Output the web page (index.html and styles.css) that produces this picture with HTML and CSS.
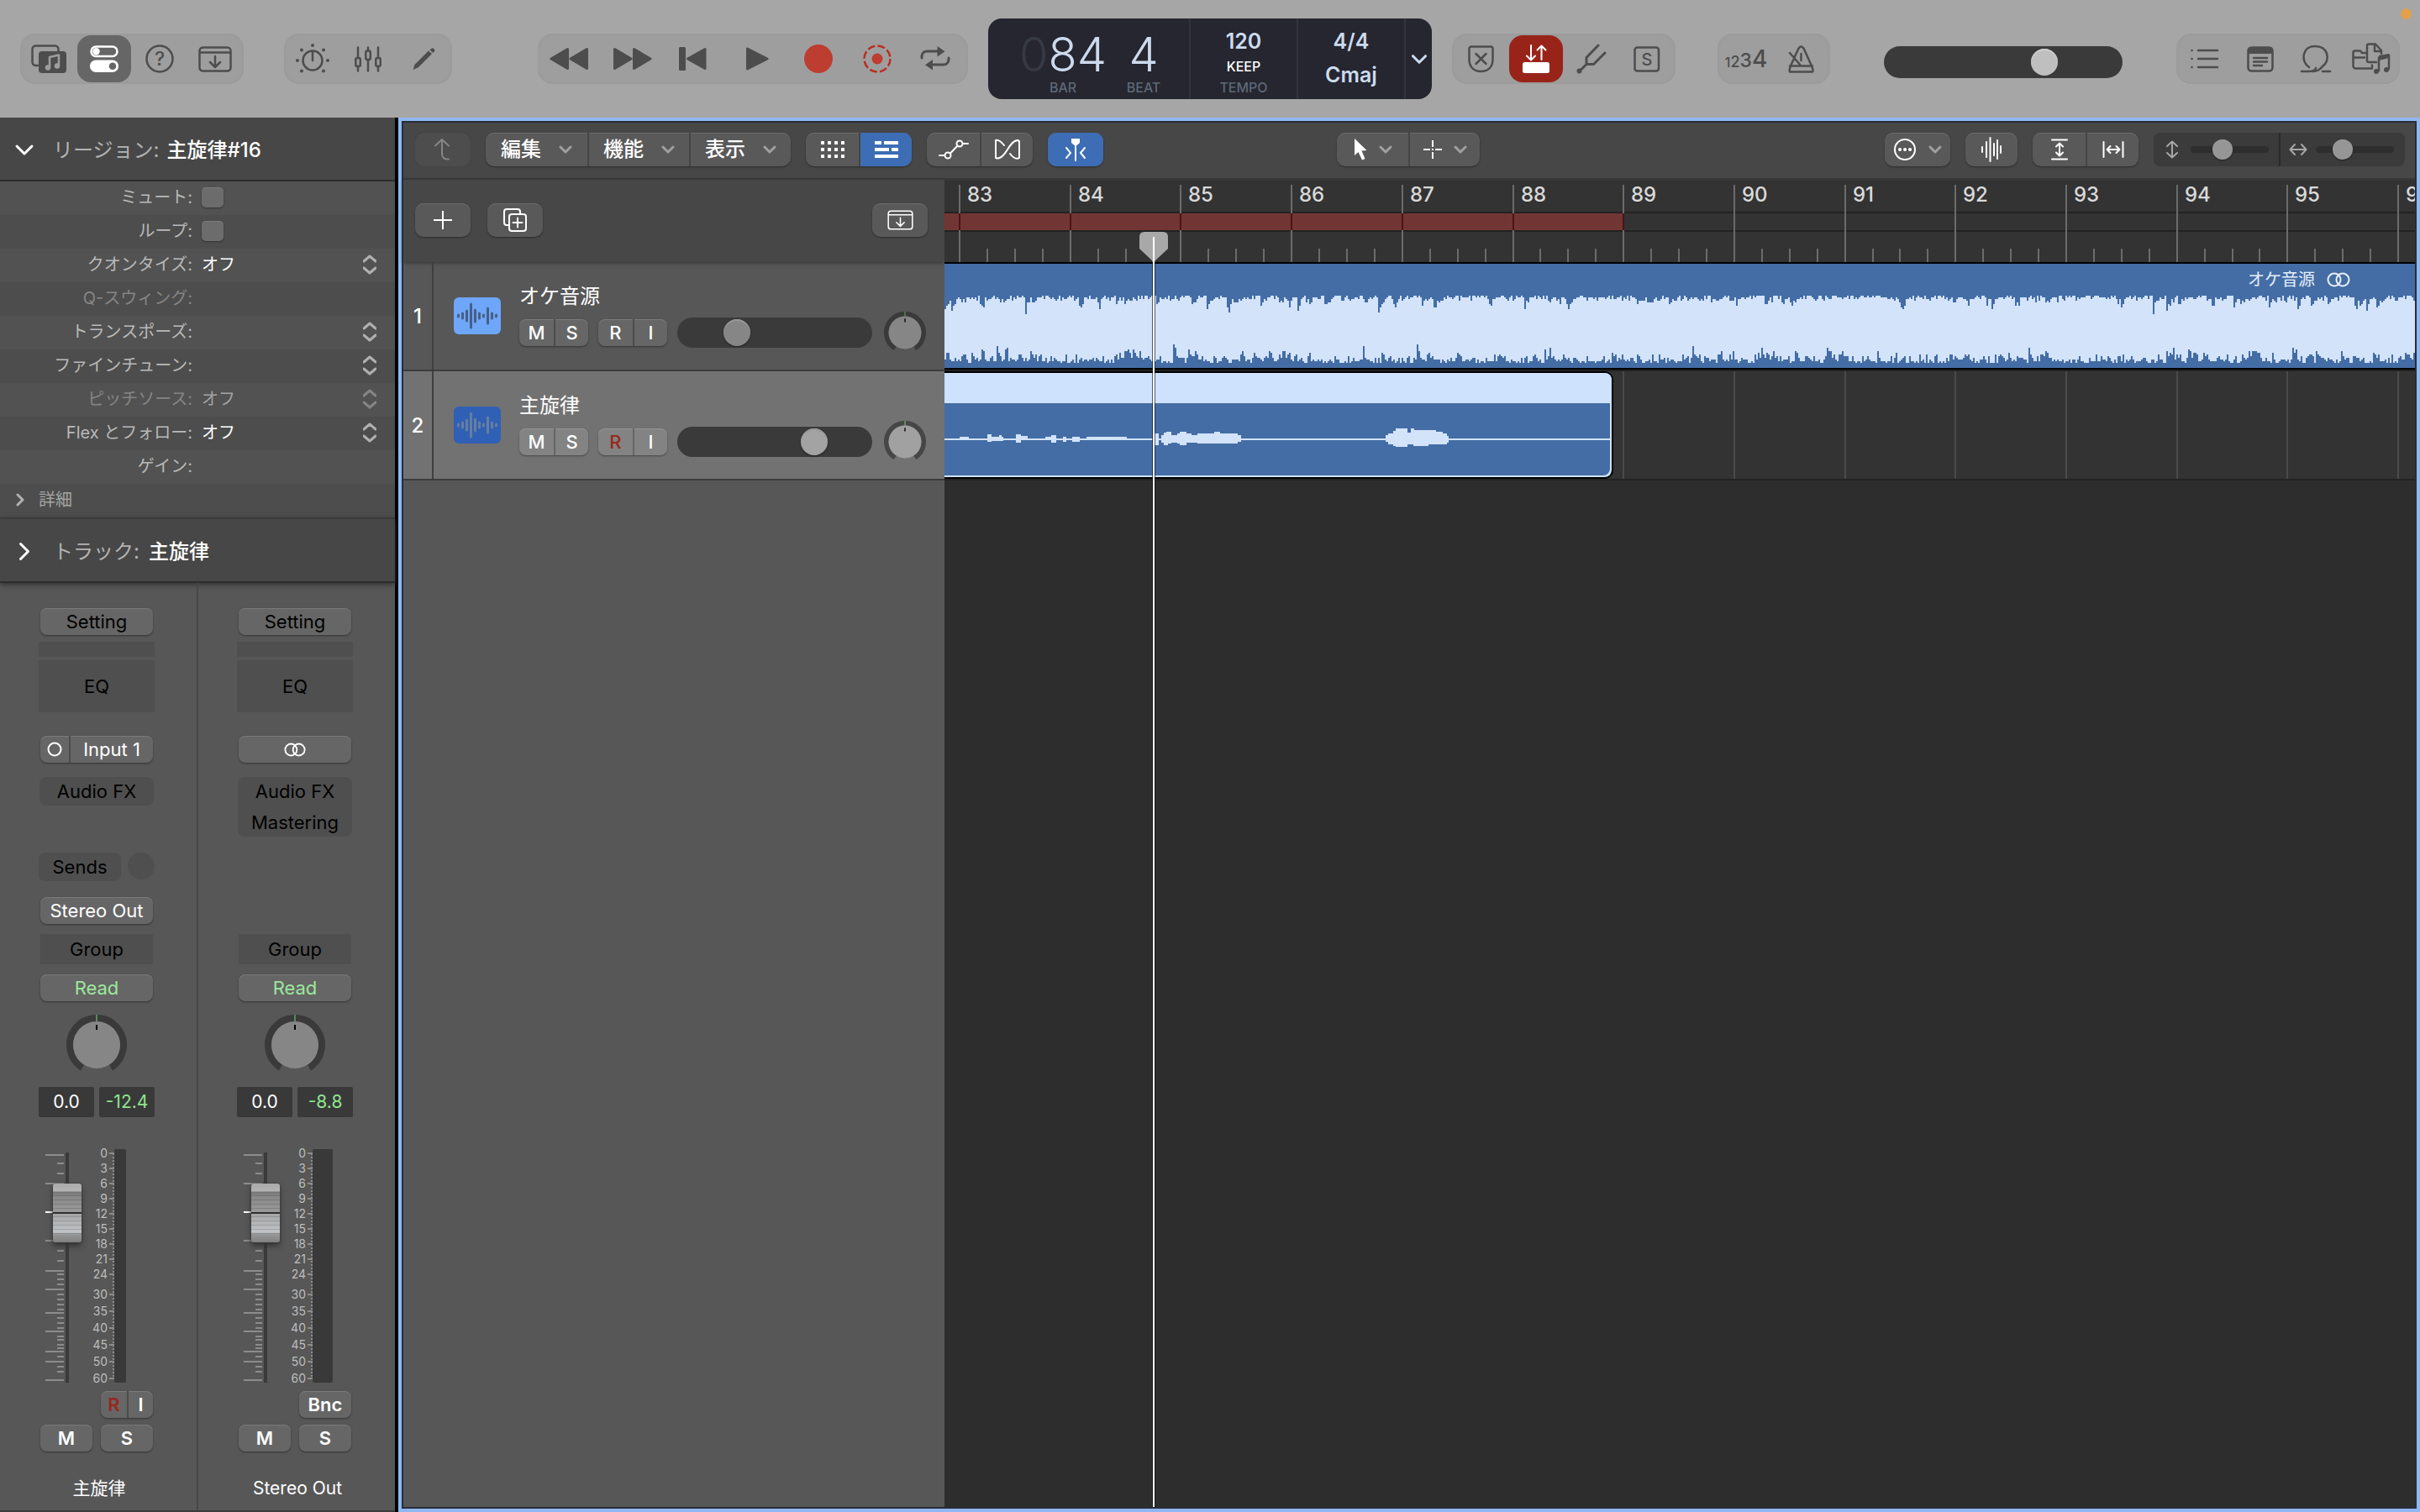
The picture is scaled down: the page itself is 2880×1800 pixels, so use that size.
FILE: index.html
```html
<!doctype html>
<html lang="ja">
  <head>
    <meta charset="utf-8" />
    <title>主旋律 - トラック</title>
    <meta name="viewport" content="width=device-width, initial-scale=1" />
    <link rel="stylesheet" href="styles.css" />
  </head>
  <body>
    <svg class="defs" aria-hidden="true">
      <symbol id="i-down" viewBox="0 0 16 10"><path d="M2 2l6 6 6-6" /></symbol>
      <symbol id="i-step" viewBox="0 0 16 24"><path d="M1 8l7-6 7 6M1 16l7 6 7-6" /></symbol>
      <symbol id="i-tray" viewBox="0 0 40 31">
        <rect x="1.5" y="1.5" width="37" height="28" rx="4" /><path d="M2 7.5h36M20 12v13M14 19l6 6 6-6" />
      </symbol>
      <symbol id="i-stereo" viewBox="0 0 28 18"><circle cx="9" cy="9" r="7.5" /><circle cx="19" cy="9" r="7.5" /></symbol>
      <symbol id="i-wave" viewBox="0 0 50 34">
        <path d="M2.500 16v2M7.500 14v6M12.500 11v12M17.500 3v28M22.500 10v14M27.500 14v6M32.500 16v2M37.500 8v18M42.500 14v6M47.500 16v2" />
      </symbol>
      <symbol id="i-pan" viewBox="0 0 72 72">
        <path class="ring" d="M19 63A32 32 0 1 1 53 63" />
        <path class="zero" d="M36 0v8" /><circle class="cap" cx="36" cy="36" r="28" /><path class="mark" d="M36 12v6" />
      </symbol>
    </svg>

    <header class="toolbar">
      <div class="group">
        <button aria-label="ライブラリ">
          <svg class="icon" width="42" height="34">
            <path d="M8 25H5.500a4 4 0 0 1-4-4V5.500a4 4 0 0 1 4-4h23a4 4 0 0 1 4 4V8" />
            <rect class="solid" x="9" y="8" width="33" height="26" rx="4" />
            <path class="cut" d="M22 27V15l11-2.500V25" /><circle class="cutfill" cx="20" cy="27.500" r="3.200" /><circle class="cutfill" cx="31" cy="25.500" r="3.200" />
          </svg>
        </button>
        <button class="on" aria-label="インスペクタ">
          <svg class="icon" width="34" height="32">
            <rect x="1.500" y="1.500" width="31" height="11.500" rx="5.700" /><circle class="solid" cx="7.500" cy="7.200" r="4.200" />
            <rect class="solid" y="17.500" width="34" height="14.500" rx="7.200" /><circle class="onhole" cx="27" cy="24.700" r="4.300" />
          </svg>
        </button>
        <button aria-label="クイックヘルプ">
          <svg class="icon" width="34" height="34">
            <circle cx="17" cy="17" r="15.500" /><text x="17" y="25" font-size="23" text-anchor="middle">?</text>
          </svg>
        </button>
        <button aria-label="ツールバー"><svg class="icon" width="40" height="31"><use href="#i-tray" /></svg></button>
      </div>

      <div class="group">
        <button aria-label="Smart Control">
          <svg class="icon" width="40" height="36">
            <circle cx="20" cy="20" r="11.500" /><path d="M20 10v10" />
            <g class="solid"><circle cx="20" cy="2" r="2" /><circle cx="7" cy="7.500" r="2" /><circle cx="33" cy="7.500" r="2" /><circle cx="2" cy="20" r="2" /><circle cx="38" cy="20" r="2" /><circle cx="7" cy="32.500" r="2" /><circle cx="33" cy="32.500" r="2" /></g>
          </svg>
        </button>
        <button aria-label="ミキサー">
          <svg class="icon" width="32" height="31">
            <path d="M4 1.500v12M4 24v5.500M16 1.500v4M16 16v13.500M28 1.500v12M28 24v5.500" />
            <rect x="1.300" y="14" width="5.500" height="10" rx="2" /><rect x="13.300" y="5.500" width="5.500" height="10.500" rx="2" /><rect x="25.300" y="14" width="5.500" height="10" rx="2" />
          </svg>
        </button>
        <button aria-label="エディタ">
          <svg class="icon" width="27" height="27"><path class="solid" d="M0.500 26l2-6L19 3.500 23 7 6.500 23.500zM20.500 2.500l2-1.800q1.500-1 3 .5t.5 3L24.500 6z" /></svg>
        </button>
      </div>

      <div class="center">
        <div class="group transport">
          <button aria-label="巻き戻し"><svg class="icon join" width="46" height="28"><path d="M2 14L21.500 2.500v23zM25 14L44.500 2.500v23z" /></svg></button>
          <button aria-label="早送り"><svg class="icon join" width="46" height="28"><path d="M1.500 2.500L21 14 1.500 25.500zM24.500 2.500L44 14 24.500 25.500z" /></svg></button>
          <button aria-label="先頭へ"><svg class="icon join" width="33" height="28"><path d="M1.500 1.500h5v25h-5zM10.500 14L31 2.500v23z" /></svg></button>
          <button aria-label="再生"><svg class="icon join" width="27" height="28"><path d="M1.500 2v24L25 14z" /></svg></button>
          <button aria-label="録音"><svg class="icon" width="34" height="34"><circle class="rec" cx="17" cy="17" r="17" /></svg></button>
          <button aria-label="キャプチャ"><svg class="icon" width="36" height="36"><circle class="dash" cx="18" cy="18" r="15.500" /><circle class="rec" cx="18" cy="18" r="6.500" /></svg></button>
          <button aria-label="サイクル">
            <svg class="icon loop" width="36" height="32">
              <path d="M2 15v-2a6 6 0 0 1 6-6h14M34 15v2a6 6 0 0 1-6 6H14" /><path class="solid" d="M20.500 1v12.500l9-6.300zM15 17v12.500l-9-6.300z" />
            </svg>
          </button>
        </div>

        <div class="lcd">
          <div class="position">
            <div><b class="digits"><i>0</i>84</b><small>BAR</small></div>
            <div><b class="digits">4</b><small>BEAT</small></div>
          </div>
          <div class="tempo"><b>120</b><em>KEEP</em><small>TEMPO</small></div>
          <div class="key"><b>4/4</b><b class="scale">Cmaj</b></div>
          <button aria-label="表示モード"><svg class="icon" width="20" height="13"><use href="#i-down" /></svg></button>
        </div>

        <div class="group">
          <button aria-label="置き換え">
            <svg class="icon" width="31" height="33"><path d="M4 1.500h23a2.500 2.500 0 0 1 2.500 2.500v13c0 9-6 14-14 14s-14-5-14-14V4A2.500 2.500 0 0 1 4 1.500zM9.500 10l12 12M21.500 10l-12 12" /></svg>
          </button>
          <button class="on armed" aria-label="ロー・レイテンシー">
            <svg class="icon thin" width="32" height="34"><path d="M10 1v17M5 13.500l5 5 5-5M22.500 18V1.500M17.500 6.500l5-5 5 5" /><rect class="solid" y="21" width="32" height="13" rx="2.500" /></svg>
          </button>
          <button aria-label="チューナー">
            <svg class="icon fork" width="36" height="36"><path d="M26 2L12 16.500V24.500h8.500L34 11M12 24.500L4 32.500" /><circle class="solid" cx="3.500" cy="32.500" r="3" /></svg>
          </button>
          <button aria-label="ソロ">
            <svg class="icon" width="32" height="31"><rect x="1.500" y="1.500" width="28.500" height="28" rx="3" /><text x="16" y="23" font-size="20" text-anchor="middle">S</text></svg>
          </button>
        </div>
      </div>

      <div class="group">
        <button class="count" aria-label="カウントイン"><span>1</span><span>2</span><span>3</span><span>4</span></button>
        <button aria-label="メトロノーム">
          <svg class="icon" width="32" height="33"><path d="M2 31.500c-1-2 0-4 1-7l9-20q3.500-6 7 0l9 20c1 3 2.500 5 1 7zM2 24.500h27M15.500 10v8M2 9l13 15" /></svg>
        </button>
      </div>
      <input class="volume" type="range" value="70" aria-label="マスター音量" />
      <div class="group">
        <button aria-label="リスト"><svg class="icon" width="36" height="26"><path d="M10 3h23M10 13h23M10 23h23M2.500 3h.1M2.500 13h.1M2.500 23h.1" /></svg></button>
        <button aria-label="ノート">
          <svg class="icon" width="32" height="31"><rect x="1.500" y="1.500" width="29" height="28" rx="4" /><path class="solid" d="M1 9V5a4 4 0 0 1 4-4h22a4 4 0 0 1 4 4v4z" /><path d="M8 14h16M8 18.500h16M8 23h10" /></svg>
        </button>
        <button aria-label="ループブラウザ">
          <svg class="icon" width="38" height="35"><path d="M2 32h9c5 0 8-2 8-4M11 27C1 21 2 2 18 2s19 17 9 24c-3 3-5 6-12 6M27 32h9" /></svg>
        </button>
        <button aria-label="ブラウザ">
          <svg class="icon" width="46" height="38">
            <path d="M16 12h-4l-2-2.500H3.500A2 2 0 0 0 1.500 11.500v16a3 3 0 0 0 3 3H24v-4M1.500 17.500H15M29 23h-9a2 2 0 0 1-2-2V3.500a2 2 0 0 1 2-2h8L35 9v4M27 2v8h8" />
            <path d="M32 33V17.500l12-3V31" /><path class="solid" d="M32 15l12-2v5l-12 3z" /><circle class="solid" cx="29" cy="34" r="3" /><circle class="solid" cx="41" cy="32" r="3" />
          </svg>
        </button>
      </div>
      <span class="mic-dot"></span>
    </header>

    <div class="workspace">
      <aside class="inspector">
        <h2><svg class="icon" width="24" height="15"><use href="#i-down" /></svg><span>リージョン:</span> 主旋律#16</h2>
        <form class="params">
          <div class="row"><label for="mute">ミュート:</label><input id="mute" type="checkbox" /></div>
          <div class="row"><label for="loop">ループ:</label><input id="loop" type="checkbox" /></div>
          <div class="row"><label for="quantize">クオンタイズ:</label><select id="quantize"><option>オフ</option></select><svg class="icon" width="16" height="24"><use href="#i-step" /></svg></div>
          <div class="row dim"><label for="swing">Q-スウィング:</label><input id="swing" type="text" disabled /></div>
          <div class="row"><label for="transpose">トランスポーズ:</label><input id="transpose" type="text" /><svg class="icon" width="16" height="24"><use href="#i-step" /></svg></div>
          <div class="row"><label for="fine">ファインチューン:</label><input id="fine" type="text" /><svg class="icon" width="16" height="24"><use href="#i-step" /></svg></div>
          <div class="row dim"><label for="pitch">ピッチソース:</label><select id="pitch" disabled><option>オフ</option></select><svg class="icon" width="16" height="24"><use href="#i-step" /></svg></div>
          <div class="row"><label for="flex">Flex とフォロー:</label><select id="flex"><option>オフ</option></select><svg class="icon" width="16" height="24"><use href="#i-step" /></svg></div>
          <div class="row"><label for="gain">ゲイン:</label><input id="gain" type="text" /></div>
          <div class="row more"><svg class="icon right" width="16" height="10"><use href="#i-down" /></svg>詳細</div>
        </form>
        <h2 class="closed"><svg class="icon right" width="24" height="15"><use href="#i-down" /></svg><span>トラック:</span> 主旋律</h2>

        <div class="strips">
          <section class="strip">
            <button class="key-btn dark">Setting</button>
            <div class="slot gain-slot"></div>
            <div class="slot eq">EQ</div>
            <div class="pair input"><button aria-label="モノラル"><svg class="icon" width="18" height="18"><circle cx="9" cy="9" r="7.500" /></svg></button><button>Input 1</button></div>
            <div class="fx"><div>Audio FX</div></div>
            <div class="sends"><div>Sends</div><span></span></div>
            <div class="output"><button class="key-btn">Stereo Out</button></div>
            <div class="slot grp">Group</div>
            <button class="key-btn read">Read</button>
            <svg class="pan" width="72" height="72"><use href="#i-pan" /></svg>
            <div class="levels"><output>0.0</output><output class="peak">-12.4</output></div>
            <div class="fader"><input type="range" value="82" aria-label="主旋律 音量" /><div class="db"></div><div class="meter"></div></div>
            <div class="arm"><div class="pair"><button class="red">R</button><button>I</button></div></div>
            <div class="ms"><button class="key-btn">M</button><button class="key-btn">S</button></div>
            <div class="strip-name">主旋律</div>
          </section>
          <section class="strip">
            <button class="key-btn dark">Setting</button>
            <div class="slot gain-slot"></div>
            <div class="slot eq">EQ</div>
            <button class="key-btn input" aria-label="ステレオ"><svg class="icon" width="26" height="17"><use href="#i-stereo" /></svg></button>
            <div class="fx"><div>Audio FX</div><div>Mastering</div></div>
            <div class="sends"></div>
            <div class="output"></div>
            <div class="slot grp">Group</div>
            <button class="key-btn read">Read</button>
            <svg class="pan" width="72" height="72"><use href="#i-pan" /></svg>
            <div class="levels"><output>0.0</output><output class="peak">-8.8</output></div>
            <div class="fader"><input type="range" value="82" aria-label="Stereo Out 音量" /><div class="db"></div><div class="meter wide"></div></div>
            <div class="arm"><button class="key-btn">Bnc</button></div>
            <div class="ms"><button class="key-btn">M</button><button class="key-btn">S</button></div>
            <div class="strip-name">Stereo Out</div>
          </section>
        </div>
      </aside>

      <main class="arrange">
        <nav class="menubar">
          <div class="seg off"><button aria-label="上へ"><svg class="icon" width="22" height="28"><path d="M2 9.500L10 2l8 7.500M10 2v17q0 7 8 6.500" /></svg></button></div>
          <div class="seg menus">
            <button>編集<svg class="icon" width="16" height="10"><use href="#i-down" /></svg></button>
            <button>機能<svg class="icon" width="16" height="10"><use href="#i-down" /></svg></button>
            <button>表示<svg class="icon" width="16" height="10"><use href="#i-down" /></svg></button>
          </div>
          <div class="seg">
            <button aria-label="グリッド"><svg class="icon grid" width="28" height="20"><path d="M0 2h28M0 10h28M0 18h28" /></svg></button>
            <button class="blue" aria-label="トラック"><svg class="icon bars" width="28" height="20"><path d="M0 2h8M11 2h17M0 10h17M20 10h8M0 18h28" /></svg></button>
          </div>
          <div class="seg">
            <button aria-label="オートメーション"><svg class="icon" width="36" height="26"><circle cx="11" cy="20" r="3.500" /><circle cx="25" cy="6" r="3.500" /><path d="M1 20h6M14 17.500L22.500 8.500M29 6h6" /></svg></button>
            <button aria-label="Flex"><svg class="icon" width="32" height="26"><path d="M12 8C8 3 5 1 2 2v21c5 2 9-2 14-10S26 0 30 3v20c-4 2-8-1-11-5" /></svg></button>
          </div>
          <div class="seg"><button class="blue" aria-label="キャッチ"><svg class="icon" width="26" height="28"><path class="solid" d="M8 1h10v5l-3.500 3h-3L8 6z" /><path d="M13 6v21M2 12l5 6-5 6M24 12l-5 6 5 6" /></svg></button></div>
          <div class="seg tools">
            <button aria-label="ポインタツール"><svg class="icon" width="16" height="28"><path class="solid" d="M1 1v20l4.500-4 4.500 9.500 3.500-1.500-4-9.500 6-.5z" /></svg><svg class="icon" width="16" height="10"><use href="#i-down" /></svg></button>
            <button aria-label="マーキーツール"><svg class="icon cross" width="22" height="22"><path d="M11 0v8M11 14v8M0 11h8M14 11h8M11 10v2" /></svg><svg class="icon" width="16" height="10"><use href="#i-down" /></svg></button>
          </div>
          <div class="seg snap"><button aria-label="スナップ"><svg class="icon" width="28" height="28"><circle cx="14" cy="14" r="12" /><path class="dots" d="M8 14h.1M14 14h.1M20 14h.1" /></svg><svg class="icon" width="16" height="10"><use href="#i-down" /></svg></button></div>
          <div class="seg"><button class="narrow" aria-label="波形ズーム"><svg class="icon" width="26" height="30"><path d="M2 12v6M7 6v18M11.500 1v28M16 8v14M20 4v22M24 11v8" /></svg></button></div>
          <div class="seg">
            <button aria-label="縦ズーム"><svg class="icon" width="20" height="26"><path d="M1 1.500h18M1 24.500h18M10 6v14M6 9.500L10 5.500l4 4M6 16.500l4 4 4-4" /></svg></button>
            <button aria-label="横ズーム"><svg class="icon" width="26" height="20"><path d="M1.500 1v18M24.500 1v18M6 10h14M9.500 6L5.500 10l4 4M16.500 6l4 4-4 4" /></svg></button>
          </div>
          <div class="zoom">
            <label for="zoom-v"><svg class="icon" width="16" height="22"><path d="M8 2v18M2 7l6-5.500L14 7M2 15l6 5.500L14 15" /></svg></label><input id="zoom-v" type="range" value="38" aria-label="縦" />
            <label for="zoom-h"><svg class="icon" width="22" height="16"><path d="M2 8h18M7 2L1.500 8 7 14M15 2l5.500 6L15 14" /></svg></label><input id="zoom-h" type="range" value="29" aria-label="横" />
          </div>
        </nav>

        <div class="tracks">
          <div class="headers">
            <div class="head-tools">
              <div class="seg"><button aria-label="トラックを追加"><svg class="icon" width="22" height="22"><path d="M11 0v22M0 11h22" /></svg></button></div>
              <div class="seg"><button aria-label="トラックを複製"><svg class="icon" width="28" height="28"><path d="M7 20H4a3 3 0 0 1-3-3V4a3 3 0 0 1 3-3h13a3 3 0 0 1 3 3v2" /><rect x="7" y="7" width="20" height="20" rx="3" /><path d="M17 11.500v11M11.500 17h11" /></svg></button></div>
              <div class="seg last"><button aria-label="グローバルトラック"><svg class="icon" width="31" height="24"><use href="#i-tray" /></svg></button></div>
            </div>
            <section class="track">
              <span class="num">1</span>
              <span class="badge light"><svg width="50" height="34"><use href="#i-wave" /></svg></span>
              <div class="body">
                <div class="name">オケ音源</div>
                <div class="controls">
                  <div class="pair"><button>M</button><button>S</button></div>
                  <div class="pair"><button>R</button><button>I</button></div>
                  <input type="range" value="27" aria-label="オケ音源 音量" />
                  <svg class="pan" width="50" height="50"><use href="#i-pan" /></svg>
                </div>
              </div>
            </section>
            <section class="track selected">
              <span class="num">2</span>
              <span class="badge"><svg width="50" height="34"><use href="#i-wave" /></svg></span>
              <div class="body">
                <div class="name">主旋律</div>
                <div class="controls">
                  <div class="pair"><button>M</button><button>S</button></div>
                  <div class="pair"><button class="red">R</button><button>I</button></div>
                  <input type="range" value="74" aria-label="主旋律 音量" />
                  <svg class="pan" width="50" height="50"><use href="#i-pan" /></svg>
                </div>
              </div>
            </section>
          </div>

          <div class="timeline">
            <div class="ruler">
              <div class="bar-row"></div>
              <div class="cycle-row"><div class="cycle"></div></div>
              <div class="marks"></div>
            </div>
            <div class="lane">
              <div class="region full">
                <div class="region-name">オケ音源<svg class="icon" width="28" height="18"><use href="#i-stereo" /></svg></div>
                <svg class="wave" id="wave1" height="80"></svg>
              </div>
            </div>
            <div class="lane">
              <div class="marks"></div>
              <div class="region take">
                <div class="region-head"></div>
                <svg class="wave" id="wave2" height="86"></svg>
              </div>
            </div>
            <div class="playhead"><svg width="34" height="36"><path d="M6 0h22q6 0 6 6v14L17 36 0 20V6q0-6 6-6z" /></svg></div>
          </div>
        </div>
      </main>
    </div>
    <script src="script.js"></script>
  </body>
</html>
```
FILE: styles.css
```css
* {
  box-sizing: border-box;
}
body {
  margin: 0;
  height: 100vh;
  display: flex;
  flex-direction: column;
  overflow: hidden;
  background: #000;
  color: #fff;
  font: 20px/28px Inter, "Noto Sans CJK JP", sans-serif;
}
button,
input,
select {
  margin: 0;
  padding: 0;
  border: 0;
  background: none;
  color: inherit;
  font: inherit;
}
button {
  display: flex;
  align-items: center;
  justify-content: center;
}
.defs {
  position: absolute;
  width: 0;
  height: 0;
}
.icon {
  flex: none;
  fill: none;
  stroke: currentColor;
  stroke-width: 2;
  stroke-linecap: round;
  stroke-linejoin: round;
}
.icon .solid,
.icon text {
  fill: currentColor;
  stroke: none;
}
.icon text {
  font-weight: 500;
}
.right {
  transform: rotate(-90deg);
}

/* top toolbar */
.toolbar {
  position: relative;
  flex: none;
  display: flex;
  align-items: flex-start;
  gap: 48px;
  height: 140px;
  padding: 40px 24px 0;
  background: #a6a6a6;
  color: #4d4d4d;
}
.toolbar .icon {
  stroke-width: 2.5;
}
.group {
  display: flex;
  align-items: center;
  height: 60px;
  padding: 0 1px;
  border-radius: 18px;
  background: #9e9e9e;
  box-shadow: inset 0 0 4px #979797;
}
.group button {
  width: 66px;
  height: 56px;
}
.group .on {
  width: 64px;
  margin: 0 1px;
  border-radius: 16px;
  background: #666;
  color: #fff;
}
.group .armed {
  background: #982419;
}
.toolbar .thin {
  stroke-width: 2;
}
.onhole {
  fill: #666;
  stroke: none;
}
.cut {
  stroke: #9e9e9e;
}
.cutfill {
  fill: #9e9e9e;
  stroke: none;
}
.center {
  display: flex;
  align-items: center;
  gap: 24px;
  height: 96px;
  margin: -18px 2px 0 auto;
}
.transport {
  display: grid;
  grid-template-columns: 72px 79px 64px 90px 56px 84px 54px;
  width: 512px;
}
.transport button {
  width: auto;
}
.toolbar .join {
  fill: currentColor;
  stroke-width: 3;
}
.rec {
  fill: #bd3d30;
  stroke: none;
}
.dash {
  stroke: #b93022;
  stroke-dasharray: 9 3.17;
  stroke-linecap: butt;
}
.toolbar .loop,
.toolbar .fork {
  stroke-width: 3;
}
.lcd {
  display: grid;
  grid-template-columns: 239px 128px 128px 33px;
  width: 528px;
  height: 96px;
  border-radius: 16px;
  background: #25262f;
  color: #cddaed;
  text-align: center;
}
.lcd > * + * {
  border-left: 2px solid #32343e;
}
.lcd > div {
  padding-top: 13px;
}
.lcd b,
.lcd em,
.lcd small {
  display: block;
  font-style: normal;
}
.lcd b {
  font-size: 25px;
  font-weight: 600;
  line-height: 28px;
}
.lcd em {
  color: #fff;
  font-size: 16px;
  font-weight: 500;
  line-height: 32px;
}
.lcd small {
  color: #5d6878;
  font-size: 16px;
  font-weight: 500;
  line-height: 18px;
}
.lcd .position {
  display: grid;
  grid-template-columns: 110px 82px;
  padding-left: 34px;
}
.lcd .digits {
  font-size: 56px;
  font-weight: 300;
  line-height: 60px;
}
.digits i {
  color: #363a45;
  font-style: normal;
}
.lcd .scale {
  line-height: 52px;
}
.count {
  align-items: baseline;
  font-weight: 500;
  line-height: 56px;
}
.count span:nth-child(1) {
  font-size: 16px;
}
.count span:nth-child(2) {
  font-size: 18px;
}
.count span:nth-child(3) {
  font-size: 23px;
}
.count span:nth-child(4) {
  font-size: 28px;
}
.volume {
  margin: 15px 16px 0;
}
.mic-dot {
  position: absolute;
  top: 10px;
  right: 10px;
  width: 13px;
  height: 13px;
  border-radius: 50%;
  background: #e2a04a;
}

/* sliders */
input[type="range"] {
  appearance: none;
  flex: none;
  width: 232px;
  height: 36px;
  padding: 0 2px;
  border-radius: 18px;
  background: #3a3a3a;
}
input[type="range"]::-webkit-slider-thumb {
  appearance: none;
  width: 32px;
  height: 32px;
  border-radius: 50%;
  background: #868686;
  box-shadow: inset 0 2px 1px #999, 0 1px 2px #222;
}
input.volume {
  width: 284px;
  height: 38px;
  padding: 0 3px;
  border-radius: 19px;
}
input.volume::-webkit-slider-thumb {
  background: #bfbfbf;
  box-shadow: inset 0 2px 1px #cfcfcf;
}

/* inspector */
.workspace {
  flex: 1;
  display: flex;
  gap: 4px;
  min-height: 0;
}
.inspector {
  flex: none;
  display: flex;
  flex-direction: column;
  width: 470px;
  background: #575757;
}
.inspector h2 {
  display: flex;
  flex: none;
  align-items: center;
  height: 76px;
  margin: 0;
  padding: 3px 0 0 17px;
  border-bottom: 2px solid #2c2c2c;
  background: #474747;
  font-size: 24px;
  font-weight: 500;
}
.inspector h2 span {
  margin: 0 11px 0 22px;
  color: #b3b3b3;
  font-weight: 400;
}
.inspector h2:first-child span {
  margin-right: 9px;
}
.inspector h2.closed {
  height: 78px;
  border-top: 2px solid #3c3c3c;
}
.closed {
  box-shadow: 0 2px 6px #333;
}
.row {
  display: flex;
  align-items: center;
  height: 40px;
  padding: 0 22px 2px 0;
  background: #525252;
  color: #fff;
}
.row:nth-child(even) {
  background: #4d4d4d;
}
.row label {
  flex: none;
  width: 229px;
  margin-right: 11px;
  color: #b9b9b9;
  text-align: right;
}
.row select,
.row input[type="text"] {
  appearance: none;
  flex: 1;
  min-width: 0;
  opacity: 1;
}
.row .icon {
  color: #b0b0b0;
  stroke-width: 3;
}
.dim label,
.row.dim .icon {
  color: #858585;
}
.dim label {
  color: #858585 !important;
}
.dim select {
  color: #a3a3a3;
}
.row input[type="checkbox"] {
  appearance: none;
  width: 26px;
  height: 24px;
  border-radius: 5px;
  background: #6c6c6c;
  box-shadow: inset 0 1px #7c7c7c, 0 1px 2px #333;
}
.row.more {
  gap: 14px;
  padding-left: 16px;
  color: #a5a5a5;
}

/* channel strips */
.strips {
  flex: 1;
  display: grid;
  grid-template-columns: 118fr 117fr;
  border-bottom: 2px solid #3c3c3c;
  font-size: 22px;
}
.strip {
  display: flex;
  flex-direction: column;
  align-items: center;
  padding: 30px 4px 0 0;
  border-right: 2px solid #474747;
}
.strip:last-child {
  border: 0;
}
.key-btn,
.pair {
  width: 134px;
  height: 32px;
  border-radius: 8px;
  background: #666;
  box-shadow: inset 0 1px #7b7b7b, 0 1px 2px #333;
}
.key-btn {
  flex: none;
}
.dark,
.slot,
.fx,
.sends {
  color: #000;
}
.slot {
  width: 138px;
  background: #4f4f4f;
  text-align: center;
}
.gain-slot {
  height: 18px;
  margin: 8px 0 4px;
}
.eq {
  height: 62px;
  line-height: 62px;
}
.input {
  margin-top: 28px;
}
.pair {
  display: grid;
  grid-template-columns: 1fr 1fr;
}
.pair.input {
  grid-template-columns: 34px 1fr;
}
.pair button + button {
  border-left: 2px solid #4c4c4c;
}
.fx {
  width: 136px;
  height: 90px;
  margin-top: 17px;
  text-align: center;
}
.fx div {
  height: 34px;
  border-radius: 8px;
  background: #4f4f4f;
  line-height: 34px;
}
.fx div:nth-child(2) {
  height: 37px;
  border-radius: 0 0 8px 8px;
  line-height: 40px;
}
.fx div:first-child:not(:last-child) {
  border-radius: 8px 8px 0 0;
}
.sends {
  display: flex;
  justify-content: space-between;
  width: 138px;
  height: 34px;
}
.sends div {
  width: 98px;
  border-radius: 8px;
  background: #4f4f4f;
  line-height: 34px;
  text-align: center;
}
.sends span {
  width: 32px;
  height: 32px;
  border-radius: 50%;
  background: #4f4f4f;
}
.output {
  height: 32px;
  margin: 19px 0 12px;
}
.grp {
  width: 134px;
  height: 36px;
  margin-bottom: 12px;
  line-height: 36px;
}
.read {
  color: #9be89b;
}
.strip > .pan {
  flex: none;
  margin: 16px 0 14px;
}
.ring {
  fill: none;
  stroke: #3a3a3a;
  stroke-width: 8;
}
.zero {
  stroke: #7fd67f;
  stroke-width: 1;
}
.controls .zero {
  stroke-width: 2;
}
.cap {
  fill: #868686;
}
.mark {
  stroke: #000;
  stroke-width: 2;
}
.levels {
  display: flex;
  gap: 6px;
}
.levels output {
  width: 66px;
  height: 36px;
  border-radius: 2px;
  background: #393939;
  font-size: 21px;
  line-height: 36px;
  text-align: center;
}
.levels .peak {
  color: #8fe38f;
}
.fader {
  display: flex;
  width: 138px;
  height: 278px;
  margin: 38px 0 10px;
  padding-left: 8px;
}
.fader .ticks {
  flex: none;
  width: 22px;
  stroke: #8c8c8c;
  stroke-width: 2;
}
.fader input[type="range"] {
  writing-mode: vertical-lr;
  direction: rtl;
  width: 34px;
  height: 274px;
  margin: 4px 0 0 -13px;
  padding: 0;
  border-radius: 0;
  background: linear-gradient(90deg, transparent 15px, #3a3a3a 15px 19px, transparent 19px);
}
.fader input[type="range"]::-webkit-slider-thumb {
  width: 34px;
  height: 70px;
  border-radius: 3px;
  background:
    repeating-linear-gradient(transparent 0 4px, rgba(0, 0, 0, 0.14) 4px 5px) 0 10px / 34px 50px no-repeat,
    linear-gradient(#aaa, #b4b4b4 9px, #777 10px, #888 15px, #9a9a9a 34px, #333 34px 36px, #a5a5a5 36px, #c0c4c8 58px, #999 60px, #808080);
  box-shadow: 0 4px 6px #333, 0 0 2px #333;
}
.db {
  position: relative;
  flex: none;
  width: 31px;
  color: #bdbdbd;
  font-size: 14px;
  line-height: 10px;
}
.db span {
  position: absolute;
  right: 0;
}
.fader .fine {
  flex: none;
  width: 8px;
  stroke: #8c8c8c;
  stroke-width: 2;
}
.meter {
  width: 14px;
  border-radius: 2px;
  background: #393939;
}
.meter.wide {
  width: 24px;
}
.arm,
.ms {
  display: flex;
  justify-content: flex-end;
  gap: 10px;
  width: 134px;
  margin-bottom: 8px;
  font-weight: 600;
}
.arm > *,
.ms > * {
  width: 62px;
}
.red {
  color: #97281d;
}
.strip-name {
  margin-top: 22px;
  padding-left: 6px;
  font-size: 21px;
}

/* arrange window */
.arrange {
  flex: 1;
  display: flex;
  flex-direction: column;
  min-width: 0;
  padding: 2px;
  border: 4px solid #8fb8f2;
  background: #272d37;
  box-shadow: 0 -2px #666;
}
.menubar {
  flex: none;
  display: flex;
  align-items: center;
  gap: 18px;
  height: 68px;
  padding: 0 12px 2px 14px;
  border-bottom: 2px solid #393939;
  background: #474747;
}
.seg {
  display: flex;
  height: 40px;
  border-radius: 10px;
  background: #595959;
  box-shadow: inset 0 1px #6c6c6c, 0 1px 2px #2c2c2c;
  overflow: hidden;
}
.seg button {
  min-width: 63px;
}
.seg button:only-child {
  min-width: 66px;
}
.seg button.narrow {
  min-width: 62px;
}
.seg button + button {
  border-left: 2px solid #454545;
}
.seg .blue {
  background: #3d6db5;
}
.off {
  background: #4d4d4d;
  color: #858585;
  box-shadow: 0 0 1px #333;
}
.menus button {
  gap: 21px;
  width: 121px;
  font-size: 24px;
  font-weight: 500;
}
.menus .icon,
.tools .icon:last-child,
.snap .icon:last-child {
  color: #a0a0a0;
  stroke-width: 3;
}
.grid,
.bars {
  stroke-width: 4;
  stroke-linecap: butt;
}
.grid {
  stroke-dasharray: 4 4;
}
.cross {
  stroke-linecap: butt;
}
.dots {
  stroke-width: 4;
}
.tools {
  margin: 0 auto 0 260px;
}
.tools button {
  gap: 14px;
  width: 85px;
}
.snap button {
  gap: 14px;
  width: 78px;
}
.zoom {
  display: flex;
  align-items: center;
  height: 40px;
  border-radius: 8px;
  background: #3b3b3b;
  color: #a6a6a6;
}
.zoom label {
  display: flex;
  justify-content: center;
  width: 44px;
}
.zoom label:nth-of-type(2) {
  align-items: center;
  height: 40px;
  margin-left: 12px;
  border-left: 2px solid #2a2a2a;
}
.zoom input[type="range"] {
  width: 93px;
  height: 8px;
  padding: 0;
  background: #2e2e2e;
}
.zoom input:last-child {
  margin-right: 13px;
}
.zoom input::-webkit-slider-thumb {
  width: 24px;
  height: 24px;
  background: #969696;
}
.tracks {
  flex: 1;
  display: flex;
  min-height: 0;
}
.headers {
  flex: none;
  width: 644px;
  background: #575757;
}
.head-tools {
  display: flex;
  gap: 20px;
  height: 98px;
  padding: 28px 20px 0 14px;
  background: #474747;
  box-shadow: 0 1px 4px #333;
}
.last {
  margin-left: auto;
}
.track {
  display: flex;
  height: 130px;
  border-bottom: 2px solid #3c3c3c;
}
.selected {
  background: #727272;
}
.num {
  width: 36px;
  border-right: 2px solid #3f3f3f;
  font-size: 24px;
  font-weight: 500;
  line-height: 130px;
  text-align: center;
}
.badge {
  display: flex;
  align-items: center;
  justify-content: center;
  width: 56px;
  height: 44px;
  margin: 42px 22px 0 24px;
  border-radius: 6px;
  background: #2f60b5;
  stroke: #667e9f;
  stroke-width: 3;
  stroke-linecap: round;
}
.badge.light {
  background: #6ea6fa;
  stroke: #475f85;
}
.body {
  flex: 1;
  padding-top: 24px;
}
.name {
  font-size: 24px;
  line-height: 34px;
}
.controls {
  display: flex;
  align-items: center;
  gap: 12px;
  height: 60px;
  padding-bottom: 8px;
  font-size: 22px;
  font-weight: 500;
}
.controls .pair {
  width: 82px;
}
.controls .pan {
  flex: none;
  margin-left: 2px;
}
.selected .pair {
  background: #838383;
  box-shadow: inset 0 1px #959595, 0 1px 2px #444;
}
.selected .pair button + button {
  border-color: #666;
}
.selected input::-webkit-slider-thumb {
  background: #a3a3a3;
}
.selected .pan {
  filter: brightness(1.2);
}

/* timeline */
.timeline {
  position: relative;
  flex: 1;
  min-width: 0;
  background: #2d2d2d;
  overflow: hidden;
}
.ruler {
  position: relative;
  height: 98px;
  background: #333;
}
.bar-row {
  height: 38px;
}
.cycle-row {
  height: 24px;
  border: solid #222;
  border-width: 2px 0;
}
.cycle {
  width: 808px;
  height: 20px;
  background: #713633;
}
.marks span {
  position: absolute;
  bottom: 0;
  height: 16px;
  border-left: 2px solid #6b6b6b;
}
.marks .bar {
  height: 92px;
  padding-left: 8px;
  color: #dadada;
  font-size: 24px;
  font-weight: 500;
  line-height: 24px;
}
.marks .in-cycle {
  border-image: linear-gradient(#6b6b6b 34px, #4c1413 34px 54px, #6b6b6b 54px) 1;
}
.lane {
  position: relative;
  height: 130px;
  border-bottom: 2px solid #222;
  background: #333;
}
.lane .marks .bar {
  height: 100%;
  border-color: #4a4a4a;
}
.region {
  position: relative;
  background: #446da5;
}
.full {
  height: 128px;
  border: solid #000;
  border-width: 2px 0;
}
.region-name {
  display: flex;
  align-items: center;
  justify-content: flex-end;
  gap: 14px;
  height: 38px;
  padding-right: 77px;
  color: #e6effc;
}
.wave {
  display: block;
  width: 100%;
  fill: #d2e3fa;
}
.take {
  width: 796px;
  height: 128px;
  border: solid #000;
  border-width: 2px 2px 2px 0;
  border-radius: 0 10px 10px 0;
  box-shadow: inset -2px -2px #cfe2fd;
  overflow: hidden;
}
.region-head {
  height: 36px;
  background: #cfe2fd;
}
.playhead {
  position: absolute;
  top: 62px;
  bottom: 0;
  left: 232px;
  width: 34px;
}
.playhead svg {
  display: block;
  fill: #a8a8a8;
}
.playhead::after {
  content: "";
  position: absolute;
  top: 6px;
  bottom: 0;
  left: 16px;
  width: 2px;
  background: #fff;
}
.playhead::before {
  content: "";
  position: absolute;
  top: 36px;
  bottom: 0;
  left: 15px;
  width: 4px;
  background: rgba(20, 20, 20, 0.65);
}
```
FILE: script.js
```js
const BAR = 131.7;
const FIRST_BAR = 83;
const OFFSET = 17;
const BARS = 14;

function addMark(parent, x, cls, text) {
  const el = document.createElement("span");
  el.style.left = `${Math.round(x)}px`;
  if (cls) el.className = cls;
  if (text) el.textContent = text;
  parent.append(el);
}

// ruler and lane grid
const [ruler, lane] = document.querySelectorAll(".marks");
for (let i = 0; i < BARS; i++) {
  const x = OFFSET + i * BAR;
  addMark(ruler, x, i < 7 ? "bar in-cycle" : "bar", String(FIRST_BAR + i));
  addMark(lane, x, "bar");
  for (let q = 1; q < 4; q++) addMark(ruler, x + (q * BAR) / 4);
}

// backing track waveform, one column every 2px
let seed = 7;
function rand() {
  seed = (seed * 16807) % 2147483647;
  return seed / 2147483647;
}

function peaks(n, depth) {
  const out = [];
  let burst = 0;
  for (let i = 0; i < n; i++) {
    if (rand() < 0.08) burst = 6 + rand() * 14;
    const level = rand() * rand() * depth + burst * (0.4 + rand() * 0.6);
    out.push(Math.min(24, Math.round(level / 2) * 2));
    burst *= 0.6;
  }
  return out;
}

const COLS = 880;
const top1 = peaks(COLS, 8);
const bottom1 = peaks(COLS, 13);
let d = "";
for (let i = 0; i < COLS; i++) {
  d += `M${i * 2} ${top1[i]}h2V${80 - bottom1[i]}h-2z`;
}
document.getElementById("wave1").innerHTML = `<path shape-rendering="crispEdges" d="${d}"/>`;

// vocal take: x, width, above, below
const BLOBS = [
  [0, 794, 1, 1], [18, 11, 3, 1], [51, 5, 6, 3], [56, 14, 3, 2], [65, 3, 5, 1],
  [85, 6, 6, 4], [89, 10, 4, 1], [120, 8, 3, 1], [127, 6, 5, 4], [141, 4, 3, 3],
  [152, 9, 3, 3], [169, 48, 3, 1], [249, 6, 7, 7], [258, 4, 5, 4], [261, 5, 8, 7],
  [264, 6, 9, 5], [270, 8, 5, 4], [277, 5, 7, 5], [280, 8, 9, 7], [288, 6, 7, 4],
  [294, 8, 5, 4], [301, 22, 7, 5], [321, 7, 9, 5], [327, 22, 7, 5], [349, 4, 5, 3],
  [525, 4, 5, 3], [528, 6, 7, 6], [534, 5, 10, 8], [537, 14, 13, 9], [551, 4, 8, 6],
  [555, 4, 13, 6], [558, 18, 11, 8], [576, 9, 11, 6], [585, 8, 9, 6], [593, 5, 7, 6], [597, 3, 4, 4],
];
document.getElementById("wave2").innerHTML = BLOBS.map(
  ([x, w, up, down]) => `<rect x="${x}" y="${43 - up}" width="${w}" height="${up + down}"/>`,
).join("");

// fader scales
const LONG = [7, 41, 109, 145, 167, 195, 217, 241, 253, 275];
const SHORT = [17, 29, 121, 133, 149, 155, 161, 173, 179, 185, 191, 201, 207, 213, 223, 227, 233, 237, 247, 259, 265];
const DB = [
  [0, 5], [3, 23], [6, 41], [9, 59], [12, 77], [15, 95], [18, 113], [21, 131],
  [24, 149], [30, 173], [35, 193], [40, 213], [45, 233], [50, 253], [60, 273],
];
const ticks =
  `<path d="${LONG.map((y) => `M0 ${y}h22`).join("")}${SHORT.map((y) => `M14 ${y}h8`).join("")}"/>` +
  `<path stroke="#fff" d="M0 75h22"/>`;
const fine =
  `<path d="${DB.map(([, y]) => `M2 ${y}h6`).join("")}"/>` +
  `<path d="M7 5V273" stroke-dasharray="2 2"/>`;

for (const fader of document.querySelectorAll(".fader")) {
  const db = fader.querySelector(".db");
  fader.insertAdjacentHTML("afterbegin", `<svg class="ticks" height="278">${ticks}</svg>`);
  db.insertAdjacentHTML("afterend", `<svg class="fine" height="278">${fine}</svg>`);
  db.innerHTML = DB.map(([n, y]) => `<span style="top:${y - 5}px">${n}</span>`).join("");
}
```
